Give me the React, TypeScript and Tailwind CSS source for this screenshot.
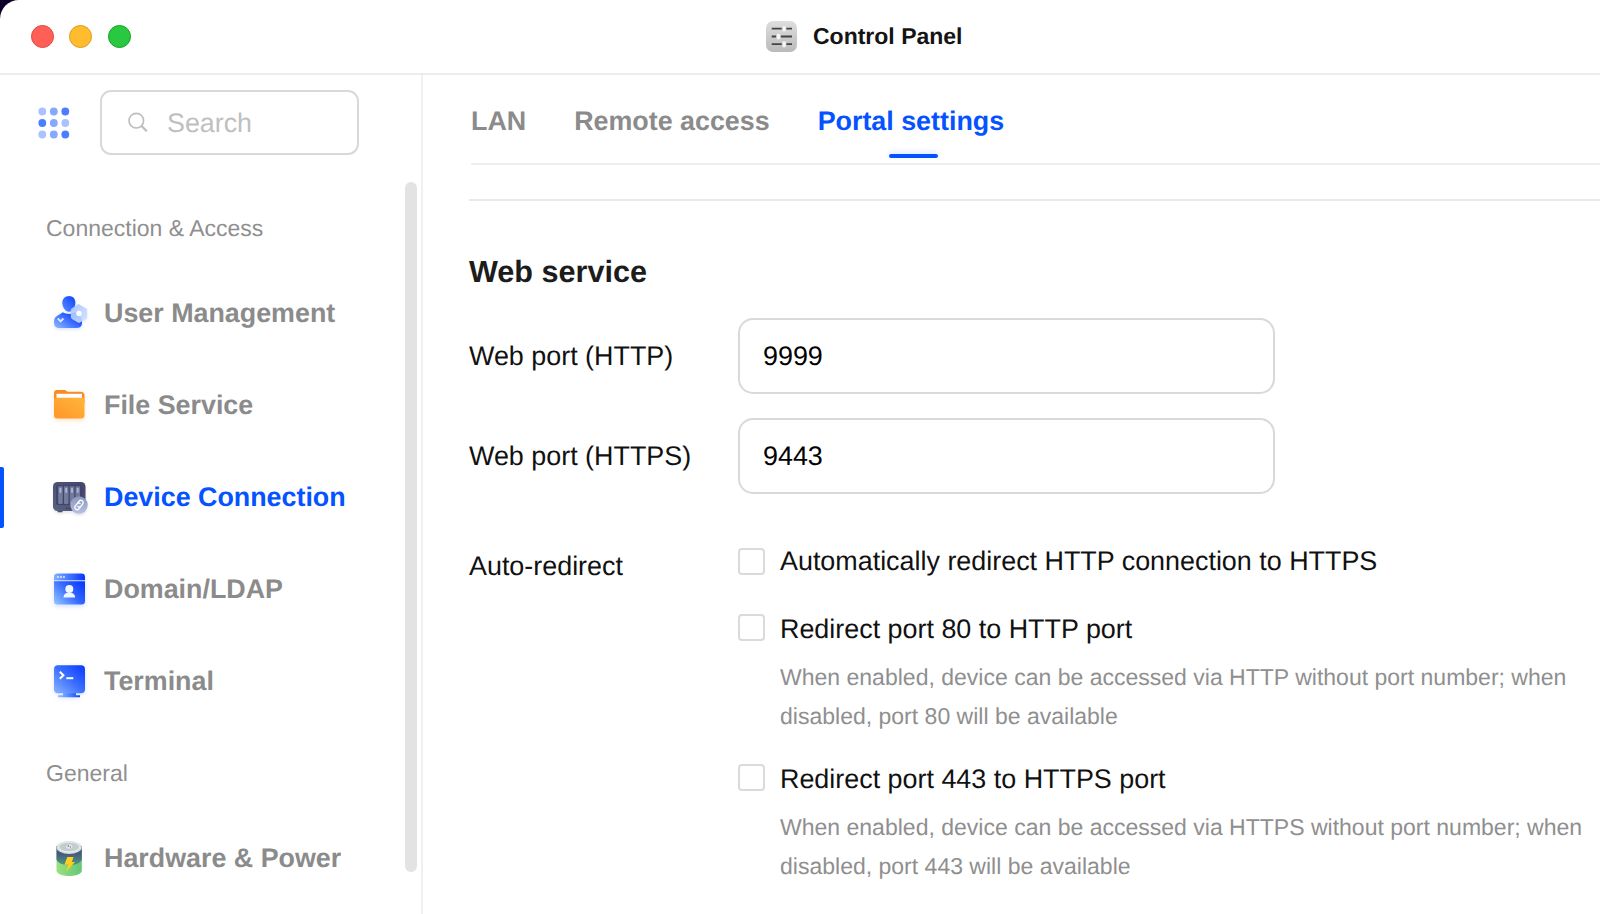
import React from "react";

function TitleIcon() {
  return (
    <svg width="31" height="31" viewBox="0 0 31 31" className="shrink-0">
      <defs>
        <linearGradient id="cp" x1="0" y1="0" x2="0" y2="1">
          <stop offset="0" stopColor="#dedede" />
          <stop offset="1" stopColor="#bababa" />
        </linearGradient>
      </defs>
      <rect width="31" height="31" rx="7" fill="url(#cp)" />
      <g stroke="#444" strokeWidth="1.800">
        <path d="M5.700 7.700H26M5.700 15.500H26M5.700 23.200H26" />
      </g>
      <g fill="#f8f8f8" stroke="#d0d0d0" strokeWidth=".8">
        <rect x="16.200" y="4.700" width="3.800" height="6" rx="1.200" />
        <rect x="10.600" y="12.500" width="3.800" height="6" rx="1.200" />
        <rect x="16.200" y="20.200" width="3.800" height="6" rx="1.200" />
      </g>
    </svg>
  );
}

function GridIcon() {
  const tones = ["#aac2ff", "#86a8ff", "#4a7dff", "#4a7dff", "#86a8ff", "#aac2ff", "#aac2ff", "#86a8ff", "#4a7dff"];
  return (
    <svg width="32" height="32" viewBox="0 0 32 32" className="shrink-0">
      {tones.map((c, i) => (
        <circle key={i} cx={4.3 + (i % 3) * 11.5} cy={4.5 + Math.floor(i / 3) * 11.5} r="3.900" fill={c} />
      ))}
    </svg>
  );
}

function UserIcon() {
  return (
    <svg width="40" height="40" viewBox="0 0 40 40" className="shrink-0 drop-shadow-[0_2px_1.5px_rgba(60,110,255,0.15)]">
      <defs>
        <linearGradient id="u1" x1="1" y1="0" x2="0" y2="1">
          <stop offset="0" stopColor="#0a40ff" />
          <stop offset="1" stopColor="#5c8fff" />
        </linearGradient>
        <linearGradient id="u2" x1="1" y1=".2" x2="0" y2="1">
          <stop offset=".15" stopColor="#0f45ff" />
          <stop offset="1" stopColor="#8fbcff" />
        </linearGradient>
        <linearGradient id="u3" x1="0" y1="0" x2="1" y2="1">
          <stop offset="0" stopColor="#a3c2ff" />
          <stop offset="1" stopColor="#d3e5ff" />
        </linearGradient>
      </defs>
      <path d="M20 3c3.700 0 6.400 2.800 6.400 6.600 0 4.600-2.700 9.200-6.400 9.200s-6.700-4.600-6.700-9.200C13.300 5.800 16.300 3 20 3z" fill="url(#u1)" />
      <path d="M13.800 19.300c4 2.200 8.600 2.200 12.600 0 4.300 1.600 6.600 5 6.600 9.300v1.200c0 3.500-2 5.200-5.500 5.200H10.800C7 35 5 33.200 5 29.500v-1.300c0-2.400 1-3.900 3-5.200z" fill="url(#u2)" />
      <path d="M8.800 25.500l2.800 2.800 2.800-2.800" fill="none" stroke="#d8e8ff" strokeWidth="1.900" />
      <path d="M30 11.200l7 4c.7.400 1.100 1.100 1.100 1.900v7c0 .8-.4 1.500-1.100 1.900l-6 3.400c-.7.400-1.400.400-2.100 0l-6-3.400c-.7-.4-1.100-1.100-1.100-1.900v-7c0-.8.4-1.500 1.100-1.900l6-4c.4-.2.800-.2 1.100 0z" fill="url(#u3)" opacity=".9" />
      <circle cx="30" cy="20.400" r="2.700" fill="#fff" />
    </svg>
  );
}

function FolderIcon() {
  return (
    <svg width="40" height="40" viewBox="0 0 40 40" className="shrink-0 drop-shadow-[0_2px_2px_rgba(255,140,40,0.25)]">
      <defs>
        <linearGradient id="f1" x1="1" y1="0" x2="0" y2="1">
          <stop offset="0" stopColor="#ffb63d" />
          <stop offset="1" stopColor="#ff9528" />
        </linearGradient>
      </defs>
      <path d="M8 5h7.500c1.500 0 2 1.700 3.500 1.700h12.500a4 4 0 0 1 4 4V18H5V8a3 3 0 0 1 3-3z" fill="#fb8a22" />
      <path d="M7.500 8.800h25.500v6H7.500z" fill="#fff" />
      <path d="M5 15.500c0-2 .7-2.700 2.600-2.700h25.200c2 0 2.700.7 2.700 2.700V30a3.500 3.500 0 0 1-3.500 3.500H8.500A3.500 3.500 0 0 1 5 30z" fill="url(#f1)" />
    </svg>
  );
}

function DeviceIcon() {
  return (
    <svg width="40" height="40" viewBox="0 0 40 40" className="shrink-0 drop-shadow-[0_2px_1px_rgba(60,60,100,0.12)]">
      <defs>
        <linearGradient id="d1" x1="1" y1="0" x2="0" y2="1">
          <stop offset="0" stopColor="#45436e" />
          <stop offset="1" stopColor="#59627f" />
        </linearGradient>
        <linearGradient id="d2" x1="0" y1="0" x2="0" y2="1">
          <stop offset="0" stopColor="#8b97ba" />
          <stop offset="1" stopColor="#b4c2e4" />
        </linearGradient>
      </defs>
      <path d="M7.500 32h6v3.300H9zM28 32h5l-1 3.300h-4z" fill="#4a5070" />
      <rect x="4" y="5" width="32.500" height="29" rx="4.500" fill="url(#d1)" />
      <rect x="7" y="8" width="26.500" height="20" rx="2" fill="#41456a" />
      {[9.2, 15, 20.8, 26.5].map((x) => (
        <g key={x}>
          <rect x={x} y="9.300" width="4.500" height="17.600" rx=".8" fill="#727b9b" />
          <rect x={x + 1.2} y="11" width="2" height="4.800" rx=".5" fill="#a9b4d3" />
        </g>
      ))}
      <path d="M17 31.500h6" stroke="#303451" strokeWidth="1.200" strokeDasharray="1.300 1" />
      <circle cx="30" cy="28" r="8.700" fill="url(#d2)" />
      <g fill="none" stroke="#fff" strokeWidth="1.300" strokeLinecap="round" transform="translate(30 28) rotate(-52)">
        <path d="M1-2.300H3a2.300 2.300 0 0 1 0 4.600H.3a2.300 2.300 0 0 1-2.200-2.200" />
        <path d="M-1 2.300H-3a2.300 2.300 0 0 1 0-4.600H-.3A2.300 2.300 0 0 1 1.900-.1" />
      </g>
    </svg>
  );
}

function DomainIcon() {
  return (
    <svg width="40" height="40" viewBox="0 0 40 40" className="shrink-0 drop-shadow-[0_2px_2px_rgba(60,110,255,0.22)]">
      <defs>
        <linearGradient id="m1" x1="1" y1=".2" x2="0" y2=".9">
          <stop offset="0" stopColor="#0b3dff" />
          <stop offset=".45" stopColor="#3568ff" />
          <stop offset="1" stopColor="#8fc2ff" />
        </linearGradient>
        <linearGradient id="m2" x1="1" y1="0" x2="0" y2="0">
          <stop offset="0" stopColor="#0435ff" />
          <stop offset="1" stopColor="#7fb2ff" />
        </linearGradient>
      </defs>
      <path d="M5 11.300V8a3.500 3.500 0 0 1 3.500-3.500h24A3.500 3.500 0 0 1 36 8v3.300z" fill="url(#m2)" />
      <path d="M5 12.300h31V32a3.500 3.500 0 0 1-3.500 3.500h-24A3.500 3.500 0 0 1 5 32z" fill="url(#m1)" />
      <path d="M8 8h8" stroke="#fff" strokeWidth="1.700" strokeDasharray="1.900 1.100" opacity=".85" />
      <circle cx="20.300" cy="20" r="4" fill="#f1f5ff" />
      <path d="M14.500 28.500c0-3 1.700-4.500 4-4.500h3.600c2.300 0 4 1.500 4 4.500z" fill="#f1f5ff" />
    </svg>
  );
}

function TerminalIcon() {
  return (
    <svg width="40" height="40" viewBox="0 0 40 40" className="shrink-0 drop-shadow-[0_1px_2px_rgba(60,110,255,0.2)]">
      <defs>
        <linearGradient id="t1" x1="1" y1="0" x2="0" y2="1">
          <stop offset="0" stopColor="#0838ff" />
          <stop offset=".5" stopColor="#3b70ff" />
          <stop offset="1" stopColor="#8cb4ff" />
        </linearGradient>
        <linearGradient id="t2" x1="1" y1="0" x2="0" y2="0">
          <stop offset="0" stopColor="#0a48ff" />
          <stop offset="1" stopColor="#9cc0ff" />
        </linearGradient>
      </defs>
      <path d="M14 31h13v3.200h4v2.100H9v-2.100h5z" fill="url(#t2)" />
      <rect x="5" y="4.300" width="31" height="28" rx="4" fill="url(#t1)" />
      <path d="M10.800 10.700l3.600 3.500-3.600 3.500" fill="none" stroke="#fff" strokeWidth="2" />
      <path d="M17.300 17.200h7" stroke="#fff" strokeWidth="2" />
    </svg>
  );
}

function BatteryIcon() {
  return (
    <svg width="40" height="40" viewBox="0 1 40 40" className="shrink-0">
      <defs>
        <linearGradient id="b1" x1="0" y1="0" x2="1" y2="0">
          <stop offset="0" stopColor="#9be07f" />
          <stop offset="1" stopColor="#62c876" />
        </linearGradient>
        <linearGradient id="b2" x1="0" y1="0" x2="0" y2="1">
          <stop offset=".4" stopColor="#47597c" />
          <stop offset="1" stopColor="#4b9a82" />
        </linearGradient>
      </defs>
      <path d="M7.500 9h25.300v24.500c0 3.300-5.700 5.500-12.600 5.500S7.500 36.800 7.500 33.500z" fill="url(#b1)" />
      <path d="M7.500 9h25.300v13.500c-1 3.500-6.500 5.700-12.600 5.700s-11.700-2.200-12.700-5.700z" fill="url(#b2)" />
      <ellipse cx="20.150" cy="10.500" rx="12.650" ry="6.400" fill="#d3dbda" />
      <ellipse cx="20.150" cy="10" rx="10.600" ry="5" fill="#c3ccce" stroke="#e6ebea" strokeWidth="1.300" />
      <ellipse cx="20.300" cy="9.500" rx="3" ry="2.100" fill="#e8ecec" />
      <circle cx="19.300" cy="9" r=".8" fill="#59605f" />
      <circle cx="21.400" cy="9.900" r=".7" fill="#8d6a64" />
      <path d="M18.300 20h6.200l-1.600 5h3l-8 9-.500-.3 1.800-6h-3.800z" fill="#ffce1f" />
    </svg>
  );
}

function NavItem({ icon, label, active }: { icon: React.ReactNode; label: string; active?: boolean }) {
  return (
    <div className="relative flex h-[92px] shrink-0 items-center pl-[49px]">
      {active && <span className="absolute left-0 top-[16px] h-[61px] w-1 rounded-r-[2px] bg-[#0552ff]" />}
      {icon}
      <span
        className={
          active
            ? "ml-[15px] text-[26.850px] font-bold leading-[30px] text-[#0552ff]"
            : "ml-[15px] text-[26.850px] font-bold leading-[30px] text-[#8b8b8b]"
        }
      >
        {label}
      </span>
    </div>
  );
}

function Sidebar() {
  return (
    <aside className="relative flex w-[423px] shrink-0 flex-col border-r-2 border-[#f0f0f0]">
      <div className="flex items-center pl-[38px] pt-[15px]">
        <GridIcon />
        <div className="ml-[30px] flex h-[65px] w-[259px] items-center rounded-[11px] border-2 border-[#d9d9d9] pl-[25px]">
          <svg width="22" height="22" viewBox="0 0 22 22" className="shrink-0" fill="none" stroke="#bdbdbd">
            <circle cx="9.300" cy="8.700" r="7.300" strokeWidth="1.600" />
            <path d="M14.300 13.800l5.500 5.500" strokeWidth="2.200" />
          </svg>
          <span className="ml-[18px] text-[26.850px] leading-[30px] text-[#bfbfbf]">Search</span>
        </div>
      </div>
      <h2 className="mt-[59px] pl-[46px] text-[23px] leading-7 text-[#8f8f8f]">Connection &amp; Access</h2>
      <nav className="mt-[25px] flex flex-col">
        <NavItem icon={<UserIcon />} label="User Management" />
        <NavItem icon={<FolderIcon />} label="File Service" />
        <NavItem icon={<DeviceIcon />} label="Device Connection" active />
        <NavItem icon={<DomainIcon />} label="Domain/LDAP" />
        <NavItem icon={<TerminalIcon />} label="Terminal" />
      </nav>
      <h2 className="mt-[32px] pl-[46px] text-[23px] leading-7 text-[#8f8f8f]">General</h2>
      <nav className="mt-[25px] flex flex-col">
        <NavItem icon={<BatteryIcon />} label="Hardware & Power" />
      </nav>
      <div className="absolute left-[405px] top-[107px] h-[690px] w-3 rounded-full bg-[#e3e3e3]" />
    </aside>
  );
}

function Field({ label, value }: { label: string; value: string }) {
  return (
    <div className="flex h-[76px] items-center">
      <span className="-mt-px w-[269px]">{label}</span>
      <div className="flex h-full w-[537px] items-center rounded-[15px] border-2 border-[#d9d9d9] pb-px pl-[23px] text-black">
        {value}
      </div>
    </div>
  );
}

function Option({ label, lines }: { label: string; lines?: string[] }) {
  return (
    <div className="flex">
      <span
        className={
          lines
            ? "h-[27px] w-[27px] shrink-0 rounded-[4px] border-2 border-[#dadada]"
            : "mt-[2px] h-[27px] w-[27px] shrink-0 rounded-[4px] border-2 border-[#dadada]"
        }
      />
      <div className="ml-[15px]">
        <div className="whitespace-nowrap leading-[30px]">{label}</div>
        {lines && (
          <div className="mt-[14px] text-[23.030px] leading-[38.500px] text-[#8f8f8f]">
            {lines.map((l) => (
              <div key={l} className="whitespace-nowrap">
                {l}
              </div>
            ))}
          </div>
        )}
      </div>
    </div>
  );
}

export default function App() {
  return (
    <div className="h-[914px] w-[1600px] overflow-hidden bg-[#0d0228]">
      <div className="flex h-full flex-col rounded-tl-[19px] bg-white font-['Liberation_Sans',Arial,sans-serif] [text-rendering:geometricPrecision]">
        <header className="flex h-[75px] shrink-0 items-center border-b-2 border-[#ececec]">
          <div className="flex w-[766px] shrink-0 pl-[31px]">
            <span className="h-[23px] w-[23px] rounded-full border border-[#e2443f] bg-[#ff5f57]" />
            <span className="ml-[15px] h-[23px] w-[23px] rounded-full border border-[#dd9a1a] bg-[#febc2e]" />
            <span className="ml-[16px] h-[23px] w-[23px] rounded-full border border-[#12a31f] bg-[#28c840]" />
          </div>
          <TitleIcon />
          <h1 className="mb-[2px] ml-4 text-[23px] font-bold leading-7 text-[#141414]">Control Panel</h1>
        </header>
        <div className="flex min-h-0 flex-1">
          <Sidebar />
          <main className="min-w-0 flex-1 pl-[46px] text-[26.900px] leading-[30px] text-[#111]">
            <div className="ml-[2px] flex h-[90px] gap-[48px] border-b-2 border-[#efefef] pt-[31px] text-[26.850px] font-bold text-[#8b8b8b]">
              <span>LAN</span>
              <span>Remote access</span>
              <span className="relative text-[#0552ff]">
                Portal settings
                <span className="absolute left-[71px] top-[47.500px] h-1 w-[49px] rounded-[2px] bg-[#0552ff] shadow-[0_-2px_5px_rgba(5,82,255,0.15)]" />
              </span>
            </div>
            <div className="mt-[34px] border-t-2 border-[#e9e9e9]" />
            <h2 className="mt-[53px] text-[30.600px] font-bold leading-9 text-[#1c1c1c]">Web service</h2>
            <div className="mt-[28px] flex flex-col gap-[24px]">
              <Field label="Web port (HTTP)" value="9999" />
              <Field label="Web port (HTTPS)" value="9443" />
            </div>
            <div className="mt-[52px] flex">
              <span className="mt-[5px] w-[269px] shrink-0">Auto-redirect</span>
              <div className="flex flex-col">
                <Option label="Automatically redirect HTTP connection to HTTPS" />
                <div className="mt-[38px]">
                  <Option
                    label="Redirect port 80 to HTTP port"
                    lines={[
                      "When enabled, device can be accessed via HTTP without port number; when",
                      "disabled, port 80 will be available",
                    ]}
                  />
                </div>
                <div className="mt-[29px]">
                  <Option
                    label="Redirect port 443 to HTTPS port"
                    lines={[
                      "When enabled, device can be accessed via HTTPS without port number; when",
                      "disabled, port 443 will be available",
                    ]}
                  />
                </div>
              </div>
            </div>
          </main>
        </div>
      </div>
    </div>
  );
}
